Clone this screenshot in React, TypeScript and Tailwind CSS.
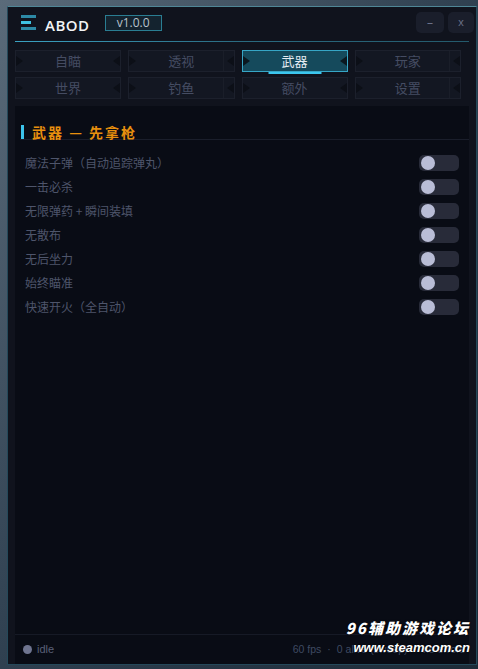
import React from "react"

const cjk = { fontFamily: '"Noto Sans CJK SC", "Noto Sans", sans-serif' }

const tabs = ["自瞄", "透视", "武器", "玩家", "世界", "钓鱼", "额外", "设置"]
const items = [
  "魔法子弹（自动追踪弹丸）",
  "一击必杀",
  "无限弹药 + 瞬间装填",
  "无散布",
  "无后坐力",
  "始终瞄准",
  "快速开火（全自动）",
]

const Logo = () => (
  <svg width="16" height="15" viewBox="0 0 16 15">
    <rect x="0" y="0" width="15" height="3" fill="#2d8aa6" />
    <rect x="0" y="6" width="10" height="3" fill="#3fc2e2" />
    <rect x="0" y="12" width="15" height="3" fill="#2d8aa6" />
  </svg>
)

const Tab = ({ label, index }: { label: string; index: number }) => {
  const active = label === "武器"
  return (
    <div
      className={
        "relative h-[22px] flex items-center justify-center border text-[13px] " +
        (active
          ? "bg-[#154a5c] border-[#36a6c6] text-[#e4ecf2]"
          : "bg-[#131722] border-[#1c202c] text-[#454c62]")
      }
      style={cjk}
    >
      <span
        className={
          "absolute left-0 top-1/2 -translate-y-1/2 w-0 h-0 border-y-[5px] border-y-transparent border-l-[7px] " +
          (active ? "border-l-[#0b1820]" : "border-l-[#0c0f17]")
        }
      />
      <span
        className={
          "absolute right-0 top-1/2 -translate-y-1/2 w-0 h-0 border-y-[5px] border-y-transparent border-r-[7px] " +
          (active ? "border-r-[#0b1820]" : "border-r-[#0c0f17]")
        }
      />
      {index % 2 === 1 && !active && (
        <span className="absolute right-[10px] top-0 bottom-0 w-px bg-[#1a1e29]" />
      )}
      {label}
      {active && (
        <span className="absolute left-1/2 -translate-x-1/2 -bottom-[3px] w-[53px] h-[2px] bg-[#3cc6ee]" />
      )}
    </div>
  )
}

const Toggle = () => (
  <div className="w-[40px] h-[16px] rounded-[5px] bg-[#282b39] flex items-center pl-[2px]">
    <span className="w-[14px] h-[14px] rounded-full bg-[#b9bdd6]" />
  </div>
)

export default function App() {
  return (
    <div className="relative w-[478px] h-[669px] overflow-hidden bg-linear-to-br from-[#5a6b7a] via-[#2f4050] to-[#1d2b38] pt-[6px] pl-[7px]">
      <div className="w-[470px] h-[659px] border border-[#24495a] border-t-[#4f8797] bg-[#10131d] flex flex-col">
        {/* header */}
        <div className="h-[31px] flex items-center pl-[13px] pr-[2px]">
          <Logo />
          <span
            className="ml-[8px] mt-[6px] text-[15px] font-semibold text-[#f2f4f6] tracking-[0.5px]"
            style={{ fontFamily: '"Open Sans", sans-serif' }}
          >
            ABOD
          </span>
          <span
            className="ml-[15px] h-[16px] w-[57px] border border-[#2a7d92] bg-[#14232f] text-[12px] leading-[14px] text-[#b8c2cc] flex items-center justify-center"
            style={{ fontFamily: '"Open Sans", sans-serif' }}
          >
            v1.0.0
          </span>
          <div className="ml-auto flex gap-[4px]">
            <button className="w-[28px] h-[21px] rounded-[5px] bg-[#1a1e2b] text-[12px] text-[#6a7088] flex items-center justify-center">
              –
            </button>
            <button
              className="w-[26px] h-[21px] rounded-[5px] bg-[#1a1e2b] text-[11px] text-[#6a7088] flex items-center justify-center"
              style={{ fontFamily: '"Liberation Sans", sans-serif' }}
            >
              x
            </button>
          </div>
        </div>
        <div className="mt-[3px] mx-[7px] h-px bg-linear-to-r from-[#3aa2c2] via-[#2a6a80] to-[#245a6c]" />

        {/* tabs */}
        <div className="mt-[8px] mx-[7px] pr-[8px] grid grid-cols-4 gap-x-[7px] gap-y-[5px]">
          {tabs.map((t, i) => (
            <Tab key={t} label={t} index={i} />
          ))}
        </div>

        {/* panel */}
        <div className="mt-[7px] mx-[7px] flex-1 bg-[#090c15] flex flex-col" style={cjk}>
          <div className="mt-[19px] ml-[5px] border-b border-[#1a1e2b]">
            <div className="flex items-center gap-[8px] pl-[1px]">
              <span className="w-[3px] h-[14px] bg-[#3cc4ec]" />
              <span className="text-[14px] leading-[14px] font-bold tracking-[2px] text-[#e8900e]">
                武器 — 先拿枪
              </span>
            </div>
          </div>

          <div className="mt-[11px] flex flex-col">
            {items.map((it) => (
              <div key={it} className="h-[24px] flex items-center justify-between pl-[10px] pr-[10px]">
                <span className="text-[12px] text-[#4e556b]">{it}</span>
                <Toggle />
              </div>
            ))}
          </div>

          <div className="flex-1" />

          <div
            className="h-[30px] border-t border-[#161a26] flex items-center pl-[8px] pr-[4px]"
            style={{ fontFamily: '"Liberation Sans", sans-serif' }}
          >
            <span className="w-[9px] h-[9px] rounded-full bg-[#6f7590]" />
            <span className="ml-[5px] text-[11px] text-[#5a6078]">idle</span>
            <div className="ml-auto flex gap-[6px] text-[10.5px] text-[#3f4a62]">
              <span>60 fps</span>
              <span>·</span>
              <span>0 alive (sweep)</span>
              <span>·</span>
              <span>no errors</span>
            </div>
          </div>
        </div>
      </div>

      {/* watermark */}
      <div
        className="absolute right-[8px] bottom-[15px] flex flex-col items-end text-white italic font-black leading-none"
        style={{ fontFamily: '"Noto Sans CJK SC", "Liberation Sans", sans-serif', textShadow: "0 0 2px #000" }}
      >
        <span className="text-[15px] tracking-[2px]">96辅助游戏论坛</span>
        <span
          className="mt-[6px] text-[13px] font-bold"
          style={{ fontFamily: '"Liberation Sans", sans-serif' }}
        >
          www.steamcom.cn
        </span>
      </div>
    </div>
  )
}
